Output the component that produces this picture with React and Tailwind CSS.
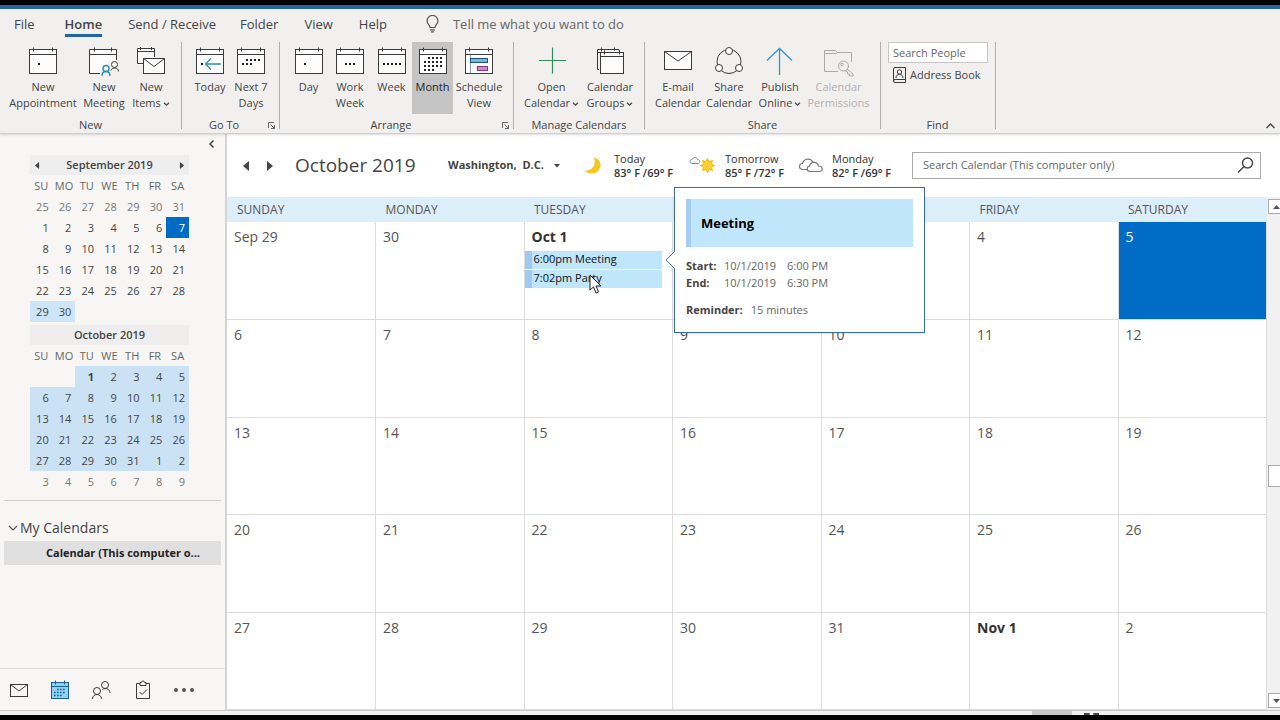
import React, { useState } from "react";

const WEEKDAYS = [
  "SUNDAY",
  "MONDAY",
  "TUESDAY",
  "WEDNESDAY",
  "THURSDAY",
  "FRIDAY",
  "SATURDAY",
];

const WEEKS = [
  ["Sep 29", "30", "Oct 1", "2", "3", "4", "5"],
  ["6", "7", "8", "9", "10", "11", "12"],
  ["13", "14", "15", "16", "17", "18", "19"],
  ["20", "21", "22", "23", "24", "25", "26"],
  ["27", "28", "29", "30", "31", "Nov 1", "2"],
];

const SEPTEMBER = [
  [25, 26, 27, 28, 29, 30, 31],
  [1, 2, 3, 4, 5, 6, 7],
  [8, 9, 10, 11, 12, 13, 14],
  [15, 16, 17, 18, 19, 20, 21],
  [22, 23, 24, 25, 26, 27, 28],
  [29, 30, "", "", "", "", ""],
];

const OCTOBER = [
  ["", "", 1, 2, 3, 4, 5],
  [6, 7, 8, 9, 10, 11, 12],
  [13, 14, 15, 16, 17, 18, 19],
  [20, 21, 22, 23, 24, 25, 26],
  [27, 28, 29, 30, 31, 1, 2],
  [3, 4, 5, 6, 7, 8, 9],
];

/* ---------- icons ---------- */

const Svg = ({ size = 28, children, className = "" }) => (
  <svg
    width={size}
    height={size}
    viewBox={`0 0 ${size} ${size}`}
    fill="none"
    stroke="#3b3b3b"
    className={`shrink-0 ${className}`}
    aria-hidden="true"
  >
    {children}
  </svg>
);

const CalFrame = () => (
  <>
    <rect x="0.5" y="2.5" width="27" height="24" fill="#fcfcfc" />
    <path d="M0.5 7.5h27M4.5 0.5v4M23.5 0.5v4" />
  </>
);

const Dots = ({ points }) =>
  points.map(([x, y]) => (
    <rect key={`${x}-${y}`} x={x} y={y} width="2" height="2" fill="#222" stroke="none" />
  ));

const dotRow = (y, xs) => xs.map((x) => [x, y]);

const DayIcon = () => (
  <Svg>
    <CalFrame />
    <Dots points={[[9, 16]]} />
  </Svg>
);

const WorkWeekIcon = () => (
  <Svg>
    <CalFrame />
    <Dots points={dotRow(16, [9, 13, 17])} />
  </Svg>
);

const WeekIcon = () => (
  <Svg>
    <CalFrame />
    <Dots points={dotRow(16, [5, 9, 13, 17, 21])} />
  </Svg>
);

const MonthIcon = () => (
  <Svg>
    <CalFrame />
    <Dots
      points={[
        ...dotRow(10, [9, 13, 17, 21]),
        ...dotRow(14, [5, 9, 13, 17, 21]),
        ...dotRow(18, [5, 9, 13, 17, 21]),
        ...dotRow(22, [5, 9, 13]),
      ]}
    />
  </Svg>
);

const NextWeekIcon = () => (
  <Svg>
    <CalFrame />
    <Dots points={[...dotRow(12, [9, 13, 17, 21]), ...dotRow(16, [5, 9, 13])]} />
  </Svg>
);

const TodayIcon = () => (
  <Svg>
    <CalFrame />
    <Dots points={[[5, 16]]} />
    <path d="M25 17H10M15 11.5L9.5 17l5.5 5.5" stroke="#2b8fb5" strokeWidth="1.3" />
  </Svg>
);

const ScheduleIcon = () => (
  <Svg>
    <CalFrame />
    <path d="M5.5 8v18" stroke="#8a9aa8" />
    <rect x="5.5" y="11.5" width="17" height="4" fill="#6db9ec" stroke="#23547d" />
    <rect x="12.5" y="19.5" width="10" height="4" fill="#d583cc" stroke="#843a7c" />
  </Svg>
);

const MeetingIcon = () => (
  <svg width="30" height="30" viewBox="0 0 30 30" fill="none" stroke="#3b3b3b" className="-mb-0.5 shrink-0">
    <path d="M0.5 2.5h27v24H0.5z" fill="#fcfcfc" stroke="none" />
    <path d="M11 26.5H0.5v-24h27V13M0.5 7.5h27M5.5 0.5v4M22.5 0.5v4" />
    <path d="M12 30v-7l5-5 4-4h9v16z" fill="#f1f0ef" stroke="none" />
    <circle cx="25.5" cy="17.5" r="3" fill="#fcfcfc" />
    <path d="M22 23.5c1-3.500 7.500-3.500 7.500 1" />
    <g stroke="#2b8fb5" strokeWidth="1.4">
      <circle cx="17" cy="21.5" r="3" fill="#fcfcfc" />
      <path d="M13 29c0-6 8-6 8 0" />
    </g>
  </svg>
);

const NewItemsIcon = () => (
  <Svg>
    <path d="M0.5 1.5h17V12h-11v5.5h-6z" fill="#fcfcfc" stroke="none" />
    <path d="M6 16.5H0.5v-15h17V10M0.5 4.5h17M3.5 0v3M14.5 0v3" />
    <rect x="6.5" y="11.5" width="21" height="15" fill="#fcfcfc" />
    <path d="M6.5 11.5l10.5 8 10.5-8" />
  </Svg>
);

const GroupsIcon = () => (
  <Svg>
    <path d="M3 22.5H1.5v-20H23V4M1.5 5.5H4M5.5 0.5v4M18.5 0.5v3" />
    <rect x="4.5" y="5.5" width="23" height="21" fill="#fcfcfc" />
    <path d="M4.5 9.5h23M8.5 3.5v4M23.5 3.5v4" />
  </Svg>
);

const PlusIcon = () => (
  <Svg>
    <path d="M14.5 0.5v26M1 13.5h27" stroke="#2f8f55" strokeWidth="1.2" />
  </Svg>
);

const MailIcon = () => (
  <Svg>
    <rect x="0.5" y="4.5" width="27" height="18" fill="#fcfcfc" />
    <path d="M0.5 4.5L14 14 27.5 4.5" />
  </Svg>
);

const ShareIcon = () => (
  <Svg>
    <circle cx="14" cy="14.5" r="12" />
    <g fill="#fcfcfc">
      <circle cx="14" cy="4" r="3.5" />
      <circle cx="4" cy="21" r="3.5" />
      <circle cx="24" cy="21" r="3.5" />
    </g>
  </Svg>
);

const PublishIcon = () => (
  <Svg>
    <path d="M13.5 28V1.5M1 13.5l12.5-12 12.5 12" stroke="#3592cc" strokeWidth="1.3" />
  </Svg>
);

const PermissionsIcon = () => (
  <svg width="30" height="30" viewBox="0 0 30 30" fill="none" stroke="#ababab" className="-mb-0.5 shrink-0">
    <path d="M14 24.5H0.5v-21h11l2 2h14V15M0.5 6.5H12l1.5-1" />
    <circle cx="19.5" cy="19" r="5" fill="#f1f0ef" />
    <circle cx="18" cy="17.5" r="1.3" />
    <path d="M23 22l6 5v2h-3.5v-2h-2v-2l-2.5-1.5" />
  </svg>
);

const Chevron = () => (
  <svg width="7" height="5" viewBox="0 0 7 5" fill="none" stroke="#444" strokeWidth="1.2" className="ml-0.5 inline-block align-middle">
    <path d="M1 0.8l2.5 2.4L6 0.8" />
  </svg>
);

const Triangle = ({ dir, className = "" }) => (
  <svg width="8" height="10" viewBox="0 0 8 10" fill="#444" className={className} aria-hidden="true">
    <path d={dir === "left" ? "M7 0v10L1 5z" : "M1 0v10l6-5z"} />
  </svg>
);

/* ---------- ribbon ---------- */

const TABS = [
  { label: "File", className: "ml-3.5" },
  { label: "Home", active: true, className: "ml-[30px]" },
  { label: "Send / Receive", className: "ml-[26px]" },
  { label: "Folder", className: "ml-6" },
  { label: "View", className: "ml-[26px]" },
  { label: "Help", className: "ml-[26px]" },
];

const GROUPS = [
  {
    label: "New",
    width: "w-[182px] pl-2",
    items: [
      { lines: ["New", "Appointment"], Icon: DayIcon, width: "w-[70px]" },
      { lines: ["New", "Meeting"], Icon: MeetingIcon, width: "w-[52px]" },
      { lines: ["New", "Items"], Icon: NewItemsIcon, width: "w-[42px]", menu: true },
    ],
  },
  {
    label: "Go To",
    width: "w-[98px] pl-1.5",
    launcher: true,
    items: [
      { lines: ["Today"], Icon: TodayIcon, width: "w-11" },
      { lines: ["Next 7", "Days"], Icon: NextWeekIcon, width: "w-[38px]" },
    ],
  },
  {
    label: "Arrange",
    width: "w-[234px] pl-2",
    launcher: true,
    items: [
      { lines: ["Day"], Icon: DayIcon, width: "w-[41px]" },
      { lines: ["Work", "Week"], Icon: WorkWeekIcon, width: "w-[42px]" },
      { lines: ["Week"], Icon: WeekIcon, width: "w-[41px]" },
      { lines: ["Month"], Icon: MonthIcon, width: "w-[41px]", active: true },
      { lines: ["Schedule", "View"], Icon: ScheduleIcon, width: "w-[52px]" },
    ],
  },
  {
    label: "Manage Calendars",
    width: "w-[131px] pl-2",
    items: [
      { lines: ["Open", "Calendar"], Icon: PlusIcon, width: "w-[59px]", menu: true },
      { lines: ["Calendar", "Groups"], Icon: GroupsIcon, width: "w-[58px]", menu: true },
    ],
  },
  {
    label: "Share",
    width: "w-[236px] pl-2",
    items: [
      { lines: ["E-mail", "Calendar"], Icon: MailIcon, width: "w-[50px]" },
      { lines: ["Share", "Calendar"], Icon: ShareIcon, width: "w-[52px]" },
      { lines: ["Publish", "Online"], Icon: PublishIcon, width: "w-[50px]", menu: true },
      { lines: ["Calendar", "Permissions"], Icon: PermissionsIcon, width: "w-[67px]", disabled: true },
    ],
  },
];

const RibbonButton = ({ lines, Icon, width, menu, active, disabled }) => (
  <button
    type="button"
    disabled={disabled}
    className={`flex h-[72px] shrink-0 flex-col items-center pt-[5px] text-[11px] leading-4 whitespace-nowrap ${width} ${
      active ? "bg-[#c5c5c5] text-[#222]" : disabled ? "text-[#b1b1b1]" : "text-[#444]"
    }`}
  >
    <Icon />
    <span className="mt-1 flex flex-col items-center">
      {lines.map((line, i) => (
        <span key={line}>
          {line}
          {menu && i === lines.length - 1 && <Chevron />}
        </span>
      ))}
    </span>
  </button>
);

const RibbonGroup = ({ label, width, launcher, items }) => (
  <section aria-label={label} className={`flex shrink-0 flex-col border-r border-[#b0afae] ${width}`}>
    <div className="flex">
      {items.map((item) => (
        <RibbonButton key={item.lines.join(" ")} {...item} />
      ))}
    </div>
    <div className="mt-[3px] flex items-center text-[11px] leading-4 text-[#444]">
      <span className="flex-1 pr-2 text-center">{label}</span>
      {launcher && (
        <button type="button" aria-label={`${label} options`} className="mr-1">
          <svg width="7" height="7" viewBox="0 0 7 7" fill="none" stroke="#666">
            <path d="M0.5 6V0.5H6M2.5 2.5l4 4M6.5 3v3.5H3" />
          </svg>
        </button>
      )}
    </div>
  </section>
);

const Ribbon = () => (
  <header className="z-10 shrink-0 border-b border-[#cfcfcf] bg-[#f1f0ef] shadow-sm">
    <nav className="flex h-[33px] items-start text-[13px] leading-5 text-[#444]">
      {TABS.map((tab) => (
        <button
          key={tab.label}
          type="button"
          className={`mt-[5px] whitespace-nowrap ${tab.className} ${
            tab.active ? "border-b-3 border-[#1f66a8] font-semibold" : ""
          }`}
        >
          {tab.label}
        </button>
      ))}
      <label className="mt-[5px] ml-[39px] flex items-center">
        <svg width="13" height="18" viewBox="0 0 13 18" fill="none" stroke="#555" strokeWidth="1.2">
          <path d="M4 12.5c0-2.5-3-3.2-3-6.500a5.5 5.5 0 0 1 11 0c0 3.300-3 4-3 6.500zM4 14.8h5M5 16.8h3" />
        </svg>
        <input
          type="text"
          placeholder="Tell me what you want to do"
          className="ml-3.5 w-52 bg-transparent outline-none placeholder:text-[#666]"
        />
      </label>
    </nav>
    <div className="flex h-[91px] pb-1">
      {GROUPS.map((group) => (
        <RibbonGroup key={group.label} {...group} />
      ))}
      <section aria-label="Find" className="flex w-[115px] shrink-0 flex-col border-r border-[#b0afae] pl-[7px] text-[11px] leading-4 text-[#444]">
        <div className="flex h-[75px] shrink-0 flex-col items-start">
          <input
            type="text"
            aria-label="Search People"
            placeholder="Search People"
            className="h-[21px] w-[100px] border border-[#c6c6c6] bg-white px-1 outline-none placeholder:text-[#666]"
          />
          <button type="button" className="mt-1 ml-[5px] flex items-center gap-1 whitespace-nowrap">
            <svg width="13" height="16" viewBox="0 0 13 16" fill="none" stroke="#3b3b3b">
              <path d="M12.5 12.5v3H2a1.5 1.5 0 0 1-1.5-1.5V2A1.5 1.5 0 0 1 2 0.5h10.5v12H2A1.5 1.5 0 0 0 0.5 14" />
              <circle cx="6.5" cy="5" r="2.2" />
              <path d="M3 11c0-5 7-5 7 0" />
            </svg>
            Address Book
          </button>
        </div>
        <span className="pr-2 text-center">Find</span>
      </section>
      <button type="button" aria-label="Collapse ribbon" className="mr-[5px] ml-auto self-end">
        <svg width="9" height="6" viewBox="0 0 9 6" fill="none" stroke="#444" strokeWidth="1.4">
          <path d="M0.5 5L4.5 1l4 4" />
        </svg>
      </button>
    </div>
  </header>
);

/* ---------- sidebar ---------- */

const MiniMonth = ({ title, weeks, cellClass, arrows }) => (
  <div className="w-[159px] text-[11px] text-[#444]">
    <div className="flex h-5 items-center justify-between bg-[#eeeeee] px-1">
      {arrows ? (
        <button type="button" aria-label="Previous month">
          <Triangle dir="left" className="h-[7px] w-1.5" />
        </button>
      ) : (
        <span />
      )}
      <h2 className="font-semibold">{title}</h2>
      {arrows ? (
        <button type="button" aria-label="Next month">
          <Triangle dir="right" className="h-[7px] w-1.5" />
        </button>
      ) : (
        <span />
      )}
    </div>
    <table className="w-full table-fixed border-collapse leading-4">
      <thead>
        <tr className="h-[21px]">
          {["SU", "MO", "TU", "WE", "TH", "FR", "SA"].map((d) => (
            <th key={d} className="p-0 text-center font-normal text-[#666]">
              {d}
            </th>
          ))}
        </tr>
      </thead>
      <tbody>
        {weeks.map((week, w) => (
          <tr key={w} className="h-[21px]">
            {week.map((day, d) => (
              <td key={d} className={`p-0 pr-1 text-right ${cellClass(w, d)}`}>
                {day}
              </td>
            ))}
          </tr>
        ))}
      </tbody>
    </table>
  </div>
);

const septemberCell = (w, d) => {
  if (w === 0) return "text-[#777]";
  if (w === 1 && d === 6) return "bg-[#006cc6] text-white";
  if (w === 5 && d < 2) return "bg-[#cde6f7]";
  return "";
};

const octoberCell = (w, d) => {
  if (w === 5) return "text-[#777]";
  if (w === 0 && d < 2) return "";
  if (w === 0 && d === 2) return "bg-[#cbe2f5] font-bold";
  return "bg-[#cbe2f5]";
};

const Sidebar = () => (
  <aside className="flex w-[227px] shrink-0 flex-col border-r-2 border-[#d4d4d4] bg-[#f7f6f5]">
    <button type="button" aria-label="Minimize folder pane" className="mt-1.5 mr-[11px] h-2 self-end">
      <svg width="5" height="8" viewBox="0 0 5 8" fill="none" stroke="#444" strokeWidth="1.5">
        <path d="M4.5 0.5L1 4l3.5 3.5" />
      </svg>
    </button>
    <div className="mt-[7px] ml-[30px] flex flex-col gap-[3px]">
      <MiniMonth title="September 2019" weeks={SEPTEMBER} cellClass={septemberCell} arrows />
      <MiniMonth title="October 2019" weeks={OCTOBER} cellClass={octoberCell} />
    </div>
    <div className="mx-1 mt-2 border-t border-[#d0cfce] pt-[17px]">
      <button type="button" className="ml-1 flex items-center gap-0.5 text-sm leading-5 text-[#444]">
        <svg width="10" height="6" viewBox="0 0 10 6" fill="none" stroke="#555" strokeWidth="1.2">
          <path d="M1 1l4 4 4-4" />
        </svg>
        My Calendars
      </button>
      <button type="button" className="mt-[3px] block h-6 w-full bg-[#e0e0e0] pl-[42px] text-left text-[11px] font-bold text-[#222]">
        Calendar (This computer o...
      </button>
    </div>
    <nav className="mt-auto flex h-[42px] items-center border-t border-[#dcdcdc] pl-[9px]">
      <button type="button" aria-label="Mail" className="w-[41px]">
        <Svg size={20}>
          <rect x="1.5" y="4.5" width="17" height="12" />
          <path d="M1.5 4.5L10 11l8.5-6.5" />
        </Svg>
      </button>
      <button type="button" aria-label="Calendar" className="w-[41px]">
        <Svg size={20}>
          <rect x="1.5" y="2.5" width="17" height="16" fill="#8fd0f5" stroke="#1c5f8f" />
          <path d="M1.5 6.5h17M5.5 0.5v4M14.5 0.5v4" stroke="#1c5f8f" />
          <path d="M7 9.5h9M4 12.5h12M4 15.5h9" stroke="#1c5f8f" strokeWidth="1.6" strokeDasharray="1.6 1.4" />
        </Svg>
      </button>
      <button type="button" aria-label="People" className="w-[42px]">
        <Svg size={20}>
          <circle cx="14" cy="5" r="3.5" />
          <path d="M11.5 9.5c3-2 7.5-0.500 7.5 3.5" />
          <circle cx="6" cy="11" r="3.5" />
          <path d="M1.5 19c0-6 9-6 9 0" />
        </Svg>
      </button>
      <button type="button" aria-label="Tasks" className="w-10">
        <Svg size={20}>
          <path d="M7 3.5H3.5v15h13v-15H13" />
          <path d="M7 5.5v-3h1.5a1.5 1.5 0 0 1 3 0H13v3zM6.5 12l2.5 2.5 5-5" />
        </Svg>
      </button>
      <button type="button" aria-label="More">
        <svg width="22" height="6" viewBox="0 0 22 6" fill="#555">
          <circle cx="3" cy="3" r="2" />
          <circle cx="11" cy="3" r="2" />
          <circle cx="19" cy="3" r="2" />
        </svg>
      </button>
    </nav>
  </aside>
);

/* ---------- weather ---------- */

const MoonIcon = () => (
  <svg width="18" height="18" viewBox="0 0 18 18" className="shrink-0">
    <path d="M10 0.5c6 1.5 8 7 5.5 11.5C12.5 17.5 5 18 1 13.5c5 0.500 12-3 9-13z" fill="#f7c520" />
  </svg>
);

const SunCloudIcon = () => (
  <svg width="28" height="18" viewBox="0 0 28 18" className="shrink-0">
    <path d="M3 6.5a2 2 0 0 1 0-4C4 0 8 0 8.5 2.5c3 0 3 4 0 4z" fill="#fff" stroke="#888" />
    <path
      d="M18.5 0.5l1.8 3.6 3.9-1.3-1.3 3.9 3.6 1.8-3.6 1.8 1.3 3.9-3.9-1.3-1.8 3.6-1.8-3.6-3.9 1.3 1.3-3.9-3.6-1.8 3.6-1.8-1.3-3.9 3.9 1.3z"
      fill="#f3bc1c"
    />
    <circle cx="18.5" cy="8.5" r="4.6" fill="#fbd02c" />
  </svg>
);

const CloudsIcon = () => (
  <svg width="25" height="15" viewBox="0 0 25 15" fill="#fff" stroke="#777" strokeWidth="1.2" className="shrink-0">
    <path d="M3.5 11.5a3 3 0 0 1 0-6C5 0 12 0 13.5 4c4 1 4 7.5 0 7.5z" />
    <path d="M10.5 13.5a2.8 2.8 0 0 1 0-5.5c1.5-5 8-4.5 9 0 4.5 0 5 5.5 1 5.5z" />
  </svg>
);

const FORECAST = [
  { day: "Today", temp: "83° F /69° F", Icon: MoonIcon, width: "w-[105px] gap-3" },
  { day: "Tomorrow", temp: "85° F /72° F", Icon: SunCloudIcon, width: "w-[110px] gap-2" },
  { day: "Monday", temp: "82° F /69° F", Icon: CloudsIcon, width: "w-[94px] gap-2" },
];

const CalendarHeader = () => (
  <div className="flex h-[63px] shrink-0 items-center pl-[15px]">
    <button type="button" aria-label="Previous month">
      <Triangle dir="left" />
    </button>
    <button type="button" aria-label="Next month" className="ml-4">
      <Triangle dir="right" />
    </button>
    <h1 className="ml-[21px] w-[153px] text-[19px] whitespace-nowrap text-[#444]">October 2019</h1>
    <button type="button" className="flex w-[136px] shrink-0 items-center gap-2.5 text-[11px] font-bold whitespace-nowrap text-[#444]">
      Washington,&nbsp; D.C.
      <svg width="6" height="4" viewBox="0 0 6 4" fill="#444">
        <path d="M0 0h6L3 3.5z" />
      </svg>
    </button>
    <div className="flex shrink-0">
      {FORECAST.map(({ day, temp, Icon, width }) => (
        <div key={day} className={`flex shrink-0 items-center whitespace-nowrap ${width}`}>
          <Icon />
          <p className="text-[11px] leading-[14px] text-[#333]">
            {day}
            <br />
            <span className="font-semibold">{temp}</span>
          </p>
        </div>
      ))}
    </div>
    <label className="mr-[19px] ml-auto flex h-[27px] w-[349px] items-center border border-[#aaa] bg-white pr-1.5 pl-2.5">
      <input
        type="search"
        placeholder="Search Calendar (This computer only)"
        className="min-w-0 flex-1 text-[11px] outline-none placeholder:text-[#666]"
      />
      <svg width="17" height="17" viewBox="0 0 17 17" fill="none" stroke="#444" strokeWidth="1.4">
        <circle cx="10.5" cy="6" r="5" />
        <path d="M7 9.5l-6 6" />
      </svg>
    </label>
  </div>
);

/* ---------- month grid ---------- */

const EventPeek = () => (
  <div role="tooltip" className="absolute -top-[63px] left-full z-20 ml-3 h-[146px] w-[251px] border border-[#3f6f90] bg-white p-[11px] text-[11px] whitespace-nowrap shadow">
    <svg width="10" height="20" viewBox="0 0 10 20" className="absolute top-[62px] -left-[10px]">
      <path d="M10 1L1 10l9 9" fill="#fff" stroke="#4a7c9e" />
    </svg>
    <h3 className="flex h-12 items-center border-l-[5px] border-[#a3cdf2] bg-[#bfe6fb] pl-2.5 text-[13px] font-bold text-black">
      Meeting
    </h3>
    <dl className="mt-2.5 grid grid-cols-[38px_63px_1fr] leading-[17px] text-[#666]">
      <dt className="font-bold text-[#444]">Start:</dt>
      <dd>10/1/2019</dd>
      <dd>6:00 PM</dd>
      <dt className="font-bold text-[#444]">End:</dt>
      <dd>10/1/2019</dd>
      <dd>6:30 PM</dd>
    </dl>
    <p className="mt-2.5 leading-[17px] text-[#666]">
      <span className="mr-2 font-bold text-[#444]">Reminder:</span>
      15 minutes
    </p>
  </div>
);

const CursorArrow = () => (
  <svg width="13" height="20" viewBox="0 0 13 20" className="absolute top-6 left-16 z-10">
    <path d="M1 1v15l3.5-3 2.5 6 2.5-1-2.5-6H12z" fill="#fff" stroke="#222" />
  </svg>
);

const Events = () => (
  <div className="relative mr-2.5 flex flex-col gap-px pt-px text-[11px] leading-[14px] text-[#111]">
    <button type="button" className="h-[18px] border-l-[7px] border-[#9fc9f0] bg-[#bfe6fb] pb-0.5 pl-0.5 text-left whitespace-nowrap">
      6:00pm Meeting
    </button>
    <button type="button" className="h-[18px] border-l-[7px] border-[#9fc9f0] bg-[#bfe6fb] pb-0.5 pl-0.5 text-left whitespace-nowrap">
      7:02pm Party
    </button>
    <EventPeek />
    <CursorArrow />
  </div>
);

const MonthGrid = ({ selected, onSelect }) => (
  <table className="h-full w-full table-fixed border-collapse">
    <thead>
      <tr className="h-[25px] bg-[#dceefa]">
        {WEEKDAYS.map((day) => (
          <th key={day} className="p-0 pl-2.5 text-left text-xs font-normal text-[#555]">
            {day}
          </th>
        ))}
      </tr>
    </thead>
    <tbody>
      {WEEKS.map((week, w) => (
        <tr key={w} className="h-1/5">
          {week.map((day, d) => {
            const id = `${w}-${d}`;
            const bold = day === "Oct 1" || day === "Nov 1";
            return (
              <td
                key={id}
                onClick={() => onSelect(id)}
                className={`border-r border-b border-[#dcdcdc] p-0 align-top text-sm leading-5 ${
                  selected === id ? "bg-[#006cc6] text-white" : "bg-white text-[#555]"
                }`}
              >
                <div className={`h-7 pt-[5px] pl-[7px] ${bold ? "font-bold text-[#333]" : ""}`}>{day}</div>
                {day === "Oct 1" && <Events />}
              </td>
            );
          })}
        </tr>
      ))}
    </tbody>
  </table>
);

const ScrollBar = () => (
  <div className="flex w-[13px] shrink-0 flex-col overflow-hidden bg-[#f1f1f1] pl-px">
    <button type="button" aria-label="Scroll up" className="mt-0.5 flex h-[15px] w-4 shrink-0 items-center justify-center border border-[#aaa] bg-white">
      <svg width="7" height="4" viewBox="0 0 7 4" fill="#555">
        <path d="M0 4h7L3.5 0z" />
      </svg>
    </button>
    <div className="flex-[253]" />
    <div className="h-[22px] w-4 border border-[#aaa] bg-white" />
    <div className="flex-[208]" />
    <button type="button" aria-label="Scroll down" className="mb-0.5 flex h-[15px] w-4 shrink-0 items-center justify-center border border-[#aaa] bg-white">
      <svg width="7" height="4" viewBox="0 0 7 4" fill="#555">
        <path d="M0 0h7L3.5 4z" />
      </svg>
    </button>
  </div>
);

const App = () => {
  const [selected, setSelected] = useState("0-6");

  return (
    <div className="flex h-screen flex-col overflow-hidden bg-white font-['Open_Sans','Noto_Sans',sans-serif]">
      <div className="h-[9px] shrink-0 border-t-[5px] border-black bg-[#1f66ac]" />
      <Ribbon />
      <div className="flex min-h-0 flex-1">
        <Sidebar />
        <main className="flex min-w-0 flex-1 flex-col">
          <CalendarHeader />
          <div className="flex min-h-0 flex-1">
            <div className="min-w-0 flex-1">
              <MonthGrid selected={selected} onSelect={setSelected} />
            </div>
            <ScrollBar />
          </div>
        </main>
      </div>
      <footer className="flex h-[10px] shrink-0 justify-end border-t border-b-[5px] border-t-[#c8c8c8] border-b-black bg-[#f1f0ef] pr-[181px]">
        <div className="mr-3 h-1 w-10 bg-[#c8c8c8]" />
        <div className="mt-0.5 h-0.5 w-[15px] border-t-2 border-dashed border-[#444]" />
      </footer>
    </div>
  );
};

export default App;
